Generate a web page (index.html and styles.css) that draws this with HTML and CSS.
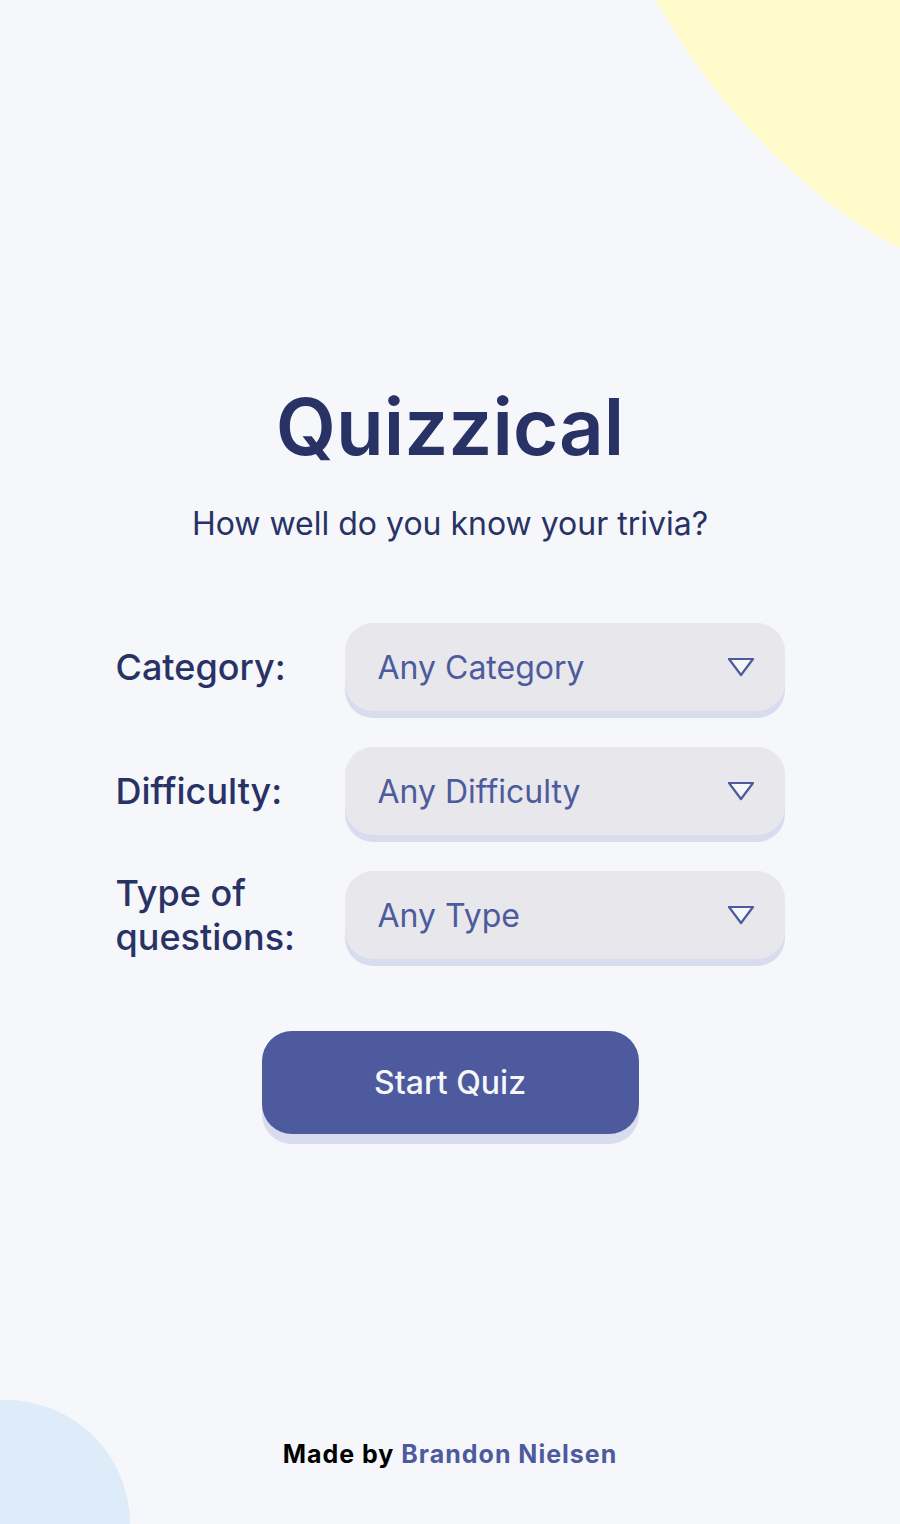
FILE: index.html
```html
<!DOCTYPE html>
<html lang="en">
<head>
<meta charset="utf-8">
<title>Quizzical</title>
<link rel="stylesheet" href="styles.css">
</head>
<body>
<svg class="blob blob-yellow" width="260" height="260" viewBox="640 0 260 260"><path d="M656 0 C 690 62 730 112 780 160 C 822 200 860 228 900 248 L 900 0 Z" fill="#fffac9"/></svg>
<div class="blob blob-blue"></div>
<main class="page">
  <section class="intro">
    <h1 class="title">Quizzical</h1>
    <p class="subtitle">How well do you know your trivia?</p>
    <form class="options">
      <div class="row">
        <label class="label">Category:</label>
        <div class="select"><span class="select-text">Any Category</span><svg class="caret" width="28" height="20" viewBox="0 0 28 20"><path d="M2 2 H26 L14 18 Z" fill="#f5f7fb" stroke="#4d5b9e" stroke-width="2.2" stroke-linejoin="round"/></svg></div>
      </div>
      <div class="row">
        <label class="label">Difficulty:</label>
        <div class="select"><span class="select-text">Any Difficulty</span><svg class="caret" width="28" height="20" viewBox="0 0 28 20"><path d="M2 2 H26 L14 18 Z" fill="#f5f7fb" stroke="#4d5b9e" stroke-width="2.2" stroke-linejoin="round"/></svg></div>
      </div>
      <div class="row">
        <label class="label">Type of<br>questions:</label>
        <div class="select"><span class="select-text">Any Type</span><svg class="caret" width="28" height="20" viewBox="0 0 28 20"><path d="M2 2 H26 L14 18 Z" fill="#f5f7fb" stroke="#4d5b9e" stroke-width="2.2" stroke-linejoin="round"/></svg></div>
      </div>
    </form>
    <button class="start" type="button">Start Quiz</button>
  </section>
  <footer class="footer">Made by <span class="author">Brandon Nielsen</span></footer>
</main>
</body>
</html>
```
FILE: styles.css
```css
* { box-sizing: border-box; }
html, body { margin: 0; padding: 0; }
html { overflow: hidden; }
body {
  background: #f5f7fb;
  font-family: Inter, "Noto Sans", sans-serif;
  color: #293264;
  width: 900px;
  height: 1524px;
  overflow: hidden;
  position: relative;
}
.blob { position: absolute; }
.blob-yellow {
  right: 0;
  top: 0;
}
.blob-blue {
  background: #deebf8;
  width: 130px;
  height: 124px;
  left: 0;
  bottom: 0;
  border-top-right-radius: 130px 130px;
}
.page {
  position: relative;
  display: flex;
  flex-direction: column;
  align-items: center;
  height: 1524px;
}
.intro {
  display: flex;
  flex-direction: column;
  align-items: center;
  padding-top: 380px;
}
.title {
  margin: 0;
  font-size: 78px;
  font-weight: 600;
  letter-spacing: 0;
  line-height: 94px;
}
.subtitle {
  margin: 30px 0 0;
  font-size: 32px;
  font-weight: 400;
  line-height: 40px;
}
.options {
  margin-top: 79px;
  display: flex;
  flex-direction: column;
  gap: 36px;
  width: 669px;
}
.row {
  display: flex;
  align-items: center;
  justify-content: space-between;
}
.label {
  font-size: 36px;
  font-weight: 500;
  line-height: 44px;
}
.select {
  width: 440px;
  height: 88px;
  background: #e8e7ec;
  border-radius: 28px;
  box-shadow: 0 7px 0 #d9dcef;
  display: flex;
  align-items: center;
  justify-content: space-between;
  padding-left: 33px;
  padding-right: 30px;
}
.select-text {
  font-size: 32px;
  color: #4d5b9e;
}
.start {
  margin-top: 72px;
  width: 377px;
  height: 103px;
  border: none;
  border-radius: 30px;
  background: #4d5b9e;
  box-shadow: 0 10px 0 #d9dcef;
  color: #f5f7fb;
  font-family: Inter, sans-serif;
  font-size: 32px;
  font-weight: 500;
}
.footer {
  margin-top: auto;
  margin-bottom: 55px;
  font-size: 25px;
  font-weight: 700;
  letter-spacing: 1px;
  color: #000;
}
.author { color: #4d5b9e; }
```
